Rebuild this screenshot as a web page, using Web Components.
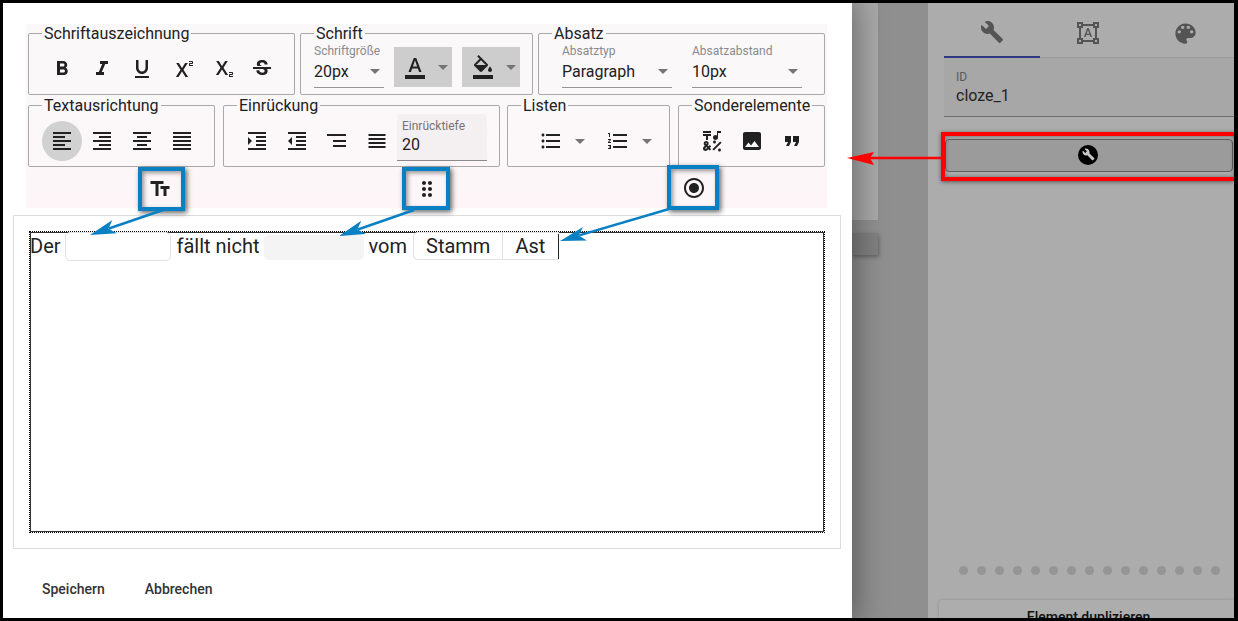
<!DOCTYPE html>
<html lang="de">
<head>
<meta charset="utf-8">
<title>Cloze</title>
<style>
  html, body { margin: 0; background: #000; }
  body { font-family: Roboto, "Liberation Sans", sans-serif; color: #212121; }
</style>
</head>
<body>

<x-frame>
  <x-dialog slot="dialog">
    <x-toolbar>
      <x-row>
        <x-group legend="Schriftauszeichnung" w="267" pad="13" dy="1">
          <x-btn icon="bold"></x-btn><x-btn icon="italic"></x-btn><x-btn icon="underline"></x-btn>
          <x-btn icon="sup"></x-btn><x-btn icon="sub"></x-btn><x-btn icon="strike"></x-btn>
        </x-group>
        <x-group legend="Schrift" w="233" pad="13" dy="-3">
          <x-select label="Schriftgröße" value="20px" w="70"></x-select>
          <x-color icon="colortext" style="margin-left:10px"></x-color>
          <x-color icon="colorfill" style="margin-left:10px"></x-color>
        </x-group>
        <x-group legend="Absatz" w="287" pad="23" dy="-3">
          <x-select label="Absatztyp" value="Paragraph" w="110"></x-select>
          <x-select label="Absatzabstand" value="10px" w="110" style="margin-left:20px"></x-select>
        </x-group>
      </x-row>
      <x-row>
        <x-group legend="Textausrichtung" w="187" pad="13" dy="1">
          <x-btn icon="alignleft" active></x-btn><x-btn icon="alignright"></x-btn>
          <x-btn icon="aligncenter"></x-btn><x-btn icon="alignjustify"></x-btn>
        </x-group>
        <x-group legend="Einrückung" w="277" pad="13" dy="1" style="margin-right:-1px">
          <x-btn icon="indent"></x-btn><x-btn icon="outdent"></x-btn>
          <x-btn icon="threelines"></x-btn><x-btn icon="fourlines"></x-btn>
          <x-numfield label="Einrücktiefe" value="20"></x-numfield>
        </x-group>
        <x-group legend="Listen" w="163" pad="23" dy="1">
          <x-btn icon="bullets"></x-btn><x-caret></x-caret>
          <x-btn icon="numbers" style="margin-left:8px"></x-btn><x-caret></x-caret>
        </x-group>
        <x-group legend="Sonderelemente" w="147" pad="13" dy="1">
          <x-btn icon="symbols"></x-btn><x-btn icon="image"></x-btn><x-btn icon="quote"></x-btn>
        </x-group>
      </x-row>
    </x-toolbar>

    <x-editor>
      Der
      <x-blank style="width:106px;margin-left:4px;margin-right:6px"></x-blank>
      fällt nicht
      <x-blank filled style="width:100px;margin-left:4px;margin-right:5px"></x-blank>
      vom
      <x-toggle style="margin-left:6px"><span>Stamm</span><span>Ast</span></x-toggle>
    </x-editor>

    <x-actions>
      <x-text-btn>Speichern</x-text-btn>
      <x-text-btn>Abbrechen</x-text-btn>
    </x-actions>
  </x-dialog>

  <x-behind slot="behind"></x-behind>

  <x-sidepanel slot="side">
    <x-tabs></x-tabs>
    <x-idfield label="ID" value="cloze_1"></x-idfield>
    <x-wide-btn></x-wide-btn>
    <x-dots count="15"></x-dots>
    <x-card>Element duplizieren</x-card>
  </x-sidepanel>

  <x-annotations slot="overlay"></x-annotations>
</x-frame>

<script>
  // material icon paths, 24x24
  const ICONS = {
    bold: 'M15.6 10.79c.97-.67 1.65-1.77 1.65-2.79 0-2.26-1.75-4-4-4H7v14h7.04c2.09 0 3.71-1.7 3.71-3.79 0-1.52-.86-2.82-2.15-3.42zM10 6.5h3c.83 0 1.5.67 1.5 1.5s-.67 1.5-1.5 1.5h-3v-3zm3.5 9H10v-3h3.5c.83 0 1.5.67 1.5 1.5s-.67 1.5-1.5 1.5z',
    italic: 'M10 4v3h2.21l-3.42 8H6v3h8v-3h-2.21l3.42-8H18V4z',
    underline: 'M12 17c3.31 0 6-2.69 6-6V3h-2.5v8c0 1.93-1.57 3.5-3.5 3.5S8.5 12.93 8.5 11V3H6v8c0 3.31 2.69 6 6 6zm-7 2v2h14v-2H5z',
    sup: 'M22 7h-2v1h3v1h-4V7c0-.55.45-1 1-1h2V5h-3V4h3c.55 0 1 .45 1 1v1c0 .55-.45 1-1 1zM5.88 20h2.66l3.4-5.42h.12l3.4 5.42h2.66l-4.65-7.27L17.81 6h-2.68l-3.07 4.99h-.12L8.85 6H6.19l4.32 6.73L5.88 20z',
    sub: 'M22 18h-2v1h3v1h-4v-2c0-.55.45-1 1-1h2v-1h-3v-1h3c.55 0 1 .45 1 1v1c0 .55-.45 1-1 1zM5.88 18h2.66l3.4-5.42h.12l3.4 5.42h2.66l-4.65-7.27L17.81 4h-2.68l-3.07 4.99h-.12L8.85 4H6.19l4.32 6.73L5.88 18z',
    strike: 'M7.24 8.75c-.26-.48-.39-1.03-.39-1.67 0-.61.13-1.16.4-1.67.26-.5.63-.93 1.11-1.29.48-.35 1.05-.63 1.7-.83.66-.19 1.39-.29 2.18-.29.81 0 1.54.11 2.21.34.66.22 1.23.54 1.69.94.47.4.83.88 1.08 1.43.25.55.38 1.15.38 1.81h-3.01c0-.31-.05-.59-.15-.85-.09-.27-.24-.49-.44-.68-.2-.19-.45-.33-.75-.44-.3-.1-.66-.16-1.06-.16-.39 0-.74.04-1.03.13-.29.09-.53.21-.72.36-.19.16-.34.34-.44.55-.1.21-.15.43-.15.66 0 .48.25.88.74 1.21.38.25.77.48 1.41.7H7.39c-.05-.08-.11-.17-.15-.25zM21 12v-2H3v2h9.62c.18.07.4.14.55.2.37.17.66.34.87.51.21.17.35.36.43.57.07.2.11.43.11.69 0 .23-.05.45-.14.66-.09.2-.23.38-.42.53-.19.15-.42.26-.71.35-.29.08-.63.13-1.01.13-.43 0-.83-.04-1.18-.13s-.66-.23-.91-.42c-.25-.19-.45-.44-.59-.75-.14-.31-.25-.76-.25-1.21H6.4c0 .55.08 1.13.24 1.58.16.45.37.85.65 1.21.28.35.6.66.98.92.37.26.78.48 1.22.65.44.17.9.3 1.38.39.48.08.96.13 1.44.13.8 0 1.53-.09 2.18-.28s1.21-.45 1.67-.79c.46-.34.82-.77 1.07-1.27s.38-1.07.38-1.71c0-.6-.1-1.14-.31-1.61-.05-.11-.11-.23-.17-.33H21z',
    alignleft: 'M15 15H3v2h12v-2zm0-8H3v2h12V7zM3 13h18v-2H3v2zm0 8h18v-2H3v2zM3 3v2h18V3H3z',
    alignright: 'M3 21h18v-2H3v2zm6-4h12v-2H9v2zm-6-4h18v-2H3v2zm6-4h12V7H9v2zM3 3v2h18V3H3z',
    aligncenter: 'M7 15v2h10v-2H7zm-4 6h18v-2H3v2zm0-8h18v-2H3v2zm4-6v2h10V7H7zM3 3v2h18V3H3z',
    alignjustify: 'M3 21h18v-2H3v2zm0-4h18v-2H3v2zm0-4h18v-2H3v2zm0-4h18V7H3v2zm0-6v2h18V3H3z',
    indent: 'M3 21h18v-2H3v2zM3 8v8l4-4-4-4zm8 9h10v-2H11v2zM3 3v2h18V3H3zm8 6h10V7H11v2zm0 4h10v-2H11v2z',
    outdent: 'M11 17h10v-2H11v2zm-8-5l4 4V8l-4 4zm0 9h18v-2H3v2zM3 3v2h18V3H3zm8 6h10V7H11v2zm0 4h10v-2H11v2z',
    threelines: 'M2 5h19v2H2zM8 11h13v2H8zM8 16h13v2H8z',
    fourlines: 'M3.5 5h17v2h-17zM3.5 9h17v2h-17zM3.5 13h17v2h-17zM3.5 17h17v2h-17z',
    bullets: 'M4 10.5c-.83 0-1.5.67-1.5 1.5s.67 1.5 1.5 1.5 1.5-.67 1.5-1.5-.67-1.5-1.5-1.5zm0-6c-.83 0-1.5.67-1.5 1.5S3.17 7.5 4 7.5 5.5 6.83 5.5 6 4.83 4.5 4 4.5zm0 12c-.83 0-1.5.68-1.5 1.5s.68 1.5 1.5 1.5 1.5-.68 1.5-1.5-.67-1.5-1.5-1.5zM7 19h14v-2H7v2zm0-6h14v-2H7v2zm0-8v2h14V5H7z',
    numbers: 'M2 17h2v.5H3v1h1v.5H2v1h3v-4H2v1zm1-9h1V4H2v1h1v3zm-1 3h1.8L2 13.1v.9h3v-1H3.2L5 10.9V10H2v1zm5-6v2h14V5H7zm0 14h14v-2H7v2zm0-6h14v-2H7v2z',
    image: 'M21 19V5c0-1.1-.9-2-2-2H5c-1.1 0-2 .9-2 2v14c0 1.1.9 2 2 2h14c1.1 0 2-.9 2-2zM8.5 13.5l2.5 3.01L14.5 12l4.5 6H5l3.5-4.5z',
    quote: 'M6 17h3l2-4V7H5v6h3zm8 0h3l2-4V7h-6v6h3z',
    symbols: 'M3 2h8v2H3zM6 11h2V7h3V5H3v2h3zM12.4 20.18l7.78-7.78 1.42 1.42-7.78 7.78zM14.5 14.5c.83 0 1.5-.67 1.5-1.5s-.67-1.5-1.5-1.5S13 12.17 13 13s.67 1.5 1.5 1.5zM19.5 19.5c-.83 0-1.5.67-1.5 1.5s.67 1.5 1.5 1.5S21 21.83 21 21s-.67-1.5-1.5-1.5zM15.5 11c1.38 0 2.5-1.12 2.5-2.5V4h3V2h-4v4.51c-.42-.32-.93-.51-1.5-.51C14.12 6 13 7.12 13 8.5S14.12 11 15.5 11zM9.74 15.96l-1.41 1.41-.71-.71.35-.35c.98-.98.98-2.56 0-3.54-.49-.49-1.13-.73-1.77-.73s-1.28.24-1.77.73c-.98.98-.98 2.56 0 3.54l.35.35-1.06 1.06c-.98.98-.98 2.56 0 3.54.49.49 1.13.74 1.78.74s1.28-.24 1.77-.73l1.06-1.06 1.41 1.41 1.41-1.41-1.41-1.41 1.41-1.41zM5.85 14c.2-.2.54-.2.74 0s.2.54 0 .74l-.35.35-.35-.35c-.24-.2-.24-.54-.04-.74zm.35 5.86c-.2.2-.54.2-.74 0-.2-.2-.2-.54 0-.74l1.06-1.06.71.71z',
    colortext: 'M2 20h20v4H2v-4zm3.49-3h2.42l1.27-3.58h5.65L16.09 17h2.42L13.25 3h-2.5L5.49 17zm4.42-5.61 2.03-5.79h.12l2.03 5.79H9.91z',
    colorfill: 'M16.56 8.94 7.62 0 6.21 1.41l2.38 2.38-5.15 5.15c-.59.59-.59 1.54 0 2.12l5.5 5.5c.29.29.68.44 1.06.44s.77-.15 1.06-.44l5.5-5.5c.59-.58.59-1.53 0-2.12zM5.21 10 10 5.21 14.79 10H5.21zM19 11.5s-2 2.17-2 3.5c0 1.1.9 2 2 2s2-.9 2-2c0-1.33-2-3.5-2-3.5zM2 20h20v4H2v-4z',
    wrench: 'M22.7 19l-9.1-9.1c.9-2.3.4-5-1.5-6.9-2-2-5-2.4-7.4-1.3L9 6 6 9 1.6 4.7C.4 7.1.9 10.1 2.9 12.1c1.9 1.9 4.6 2.4 6.9 1.5l9.1 9.1c.4.4 1 .4 1.4 0l2.3-2.3c.5-.4.5-1.1.1-1.4z',
    shapes: 'M23 7V1h-6v2H7V1H1v6h2v10H1v6h6v-2h10v2h6v-6h-2V7h2zM3 3h2v2H3V3zm2 18H3v-2h2v2zm12-2H7v-2H5V7h2V5h10v2h2v10h-2v2zm4 2h-2v-2h2v2zM19 5V3h2v2h-2zm-5.27 9h-3.49l-.73 2H7.89l3.4-9h1.4l3.41 9h-1.63l-.74-2zm-3.04-1.26h2.61L12 8.91l-1.31 3.83z',
    palette: 'M12 3c-4.97 0-9 4.03-9 9s4.03 9 9 9c.83 0 1.5-.67 1.5-1.5 0-.39-.15-.74-.39-1.01-.24-.27-.38-.62-.38-.99 0-.83.67-1.5 1.5-1.5H16c2.76 0 5-2.24 5-5 0-4.42-4.03-8-9-8zm-5.5 9c-.83 0-1.5-.67-1.5-1.5S5.67 9 6.5 9 8 9.67 8 10.5 7.33 12 6.5 12zm3-4C8.67 8 8 7.33 8 6.5S8.67 5 9.5 5s1.5.67 1.5 1.5S10.33 8 9.5 8zm5 0c-.83 0-1.5-.67-1.5-1.5S13.67 5 14.5 5s1.5.67 1.5 1.5S15.33 8 14.5 8zm3 4c-.83 0-1.5-.67-1.5-1.5S16.67 9 17.5 9s1.5.67 1.5 1.5-.67 1.5-1.5 1.5z',
    textfields: 'M2.5 4v3h5v12h3V7h5V4h-13zm19 5h-9v3h3v7h3v-7h3V9z',
    drag: 'M11 18c0 1.1-.9 2-2 2s-2-.9-2-2 .9-2 2-2 2 .9 2 2zm-2-8c-1.1 0-2 .9-2 2s.9 2 2 2 2-.9 2-2-.9-2-2-2zm0-6c-1.1 0-2 .9-2 2s.9 2 2 2 2-.9 2-2-.9-2-2-2zm6 4c1.1 0 2-.9 2-2s-.9-2-2-2-2 .9-2 2 .9 2 2 2zm0 2c-1.1 0-2 .9-2 2s.9 2 2 2 2-.9 2-2-.9-2-2-2zm0 6c-1.1 0-2 .9-2 2s.9 2 2 2 2-.9 2-2-.9-2-2-2z',
    radio: 'M12 7c-2.76 0-5 2.24-5 5s2.24 5 5 5 5-2.24 5-5-2.24-5-5-5zm0-5C6.48 2 2 6.48 2 12s4.48 10 10 10 10-4.48 10-10S17.52 2 12 2zm0 18c-4.42 0-8-3.58-8-8s3.58-8 8-8 8 3.58 8 8-3.58 8-8 8z'
  };

  const svg = (name, size = 24, color = 'currentColor') =>
    `<svg width="${size}" height="${size}" viewBox="0 0 24 24" fill="${color}" fill-rule="evenodd" style="display:block"><path d="${ICONS[name]}"/></svg>`;

  // small helper, every element is just shadow + style + markup
  class Base extends HTMLElement {
    connectedCallback() {
      if (this.shadowRoot) return;
      this.attachShadow({ mode: 'open' });
      this.shadowRoot.innerHTML = this.render();
    }
    attr(name, fallback = '') {
      return this.getAttribute(name) ?? fallback;
    }
  }

  class XFrame extends Base {
    render() {
      return `<style>
        :host { display: flex; box-sizing: border-box; width: 1238px; height: 621px; position: relative;
                border: solid #000; border-width: 3px 4px 3px 3px; overflow: hidden; background: #acacac; }
      </style>
      <slot name="dialog"></slot><slot name="behind"></slot><slot name="side"></slot><slot name="overlay"></slot>`;
    }
  }

  class XDialog extends Base {
    render() {
      return `<style>
        :host { display: block; flex: none; width: 849px; height: 615px; background: #fff; position: relative; z-index: 1;
                box-shadow: 0 0 28px 4px rgba(0,0,0,.38); box-sizing: border-box; padding-top: 21px; }
      </style><slot></slot>`;
    }
  }

  class XToolbar extends Base {
    render() {
      return `<style>
        :host { display: flex; flex-direction: column; gap: 0; box-sizing: border-box; width: 801px; height: 184px; margin-left: 23px;
                padding-left: 2px; background: linear-gradient(180deg, #fbf8fa 0%, #fbf8fa 45%, #fdf5f8 100%); }
      </style><slot></slot>`;
    }
  }

  class XRow extends Base {
    render() {
      return `<style>:host { display: flex; gap: 5px; margin-top: -1px; }
        :host(:nth-child(2)) { gap: 8px; margin-top: 0; }</style><slot></slot>`;
    }
  }

  class XGroup extends Base {
    render() {
      return `<style>
        :host { display: block; flex: none; width: ${this.attr('w')}px; }
        fieldset { display: flex; align-items: center; box-sizing: border-box; height: 72px; margin: 0; min-width: 0;
                   border: 1px solid #a9a9a9; border-radius: 2px; padding: 0; }
        legend { margin-left: 13px; padding: 2px 2px 0; font-size: 16px; line-height: 18px; color: #212121; white-space: nowrap; }
        .in { display: flex; align-items: center; margin-top: ${this.attr('dy', 0)}px; padding-left: ${this.attr('pad', 13)}px; }
      </style>
      <fieldset><legend>${this.attr('legend')}</legend><div class="in"><slot></slot></div></fieldset>`;
    }
  }

  class XBtn extends Base {
    render() {
      const on = this.hasAttribute('active');
      return `<style>
        :host { display: flex; flex: none; width: 40px; height: 40px; align-items: center; justify-content: center;
                border-radius: 50%; color: #212121; background: ${on ? '#d1d1d1' : 'transparent'}; }
      </style>${svg(this.attr('icon'))}`;
    }
  }

  class XCaret extends Base {
    render() {
      return `<style>
        :host { display: block; flex: none; width: 0; height: 0; border: solid transparent; border-width: 5px 5px 0;
                border-top-color: #757575; margin-left: 4px; margin-right: 5px; }
      </style>`;
    }
  }

  class XSelect extends Base {
    render() {
      return `<style>
        :host { display: block; flex: none; width: ${this.attr('w')}px; height: 40px; box-sizing: border-box; position: relative;
                border-bottom: 1px solid #949494; margin-top: 2px; }
        label { display: block; font-size: 12px; line-height: 13px; color: #8a8a8a; margin-top: -3px; white-space: nowrap; }
        .v { font-size: 16px; line-height: 19px; color: #212121; margin-top: 4px; white-space: nowrap; }
        .c { position: absolute; right: 4px; top: 21px; width: 0; height: 0; border: solid transparent;
             border-width: 5px 5px 0; border-top-color: #757575; }
      </style>
      <label>${this.attr('label')}</label><div class="v">${this.attr('value')}</div><div class="c"></div>`;
    }
  }

  class XColor extends Base {
    render() {
      return `<style>
        :host { display: flex; flex: none; width: 58px; height: 40px; align-items: center; align-self: flex-start; background: #cdcdcd; color: #212121; margin-top: 1px; }
        svg { margin-left: 9px; }
        .c { width: 0; height: 0; border: solid transparent; border-width: 5px 5px 0; border-top-color: #757575; margin-left: 11px; }
      </style>${svg(this.attr('icon'))}<div class="c"></div>`;
    }
  }

  class XNumfield extends Base {
    render() {
      return `<style>
        :host { display: block; flex: none; width: 90px; height: 47px; box-sizing: border-box; margin-top: -7px;
                background: #f4eff1; border-bottom: 1px solid #8a8a8a; border-radius: 4px 4px 0 0; padding: 6px 5px 0; }
        label { display: block; font-size: 12px; line-height: 13px; color: #757575; white-space: nowrap; }
        .v { font-size: 16px; line-height: 19px; margin-top: 2px; color: #212121; }
      </style><label>${this.attr('label')}</label><div class="v">${this.attr('value')}</div>`;
    }
  }

  class XEditor extends Base {
    render() {
      return `<style>
        :host { display: block; box-sizing: border-box; width: 828px; height: 334px; margin: 7px 0 0 10px; border: 1px solid #dcdcdc; padding: 15px; }
        .box { box-sizing: border-box; height: 302px; border: 1px dotted #000; box-shadow: inset 0 0 0 1px #333;
               font-size: 20px; line-height: 29px; color: #222; }
        .line { display: flex; align-items: flex-start; white-space: nowrap; }
      </style><div class="box"><div class="line"><slot></slot></div></div>`;
    }
  }

  class XBlank extends Base {
    render() {
      const filled = this.hasAttribute('filled');
      return `<style>
        :host { display: block; flex: none; box-sizing: border-box; border-radius: 5px;
                height: ${filled ? 25 : 29}px; margin-top: ${filled ? 3 : 0}px;
                ${filled ? 'background: #f4f4f4;' : 'border: 1px solid #e2e2e2;'} }
      </style>`;
    }
  }

  class XToggle extends Base {
    render() {
      return `<style>
        :host { display: flex; flex: none; box-sizing: border-box; height: 28px; border: 1px solid #e2e2e2; border-right: 0; border-radius: 5px 0 0 5px;
                position: relative; line-height: 27px; }
        ::slotted(span) { display: block; padding: 0 12px; }
        ::slotted(span:first-child) { border-right: 1px solid #e2e2e2; }
        ::slotted(span:last-child) { padding-right: 13px; }
        :host::after { content: ""; width: 1px; height: 25px; background: #222; align-self: flex-end; }
      </style><slot></slot>`;
    }
  }

  class XActions extends Base {
    render() {
      return `<style>:host { display: flex; margin: 27px 0 0 23px; }</style><slot></slot>`;
    }
  }

  class XTextBtn extends Base {
    render() {
      return `<style>
        :host { display: block; padding: 0 16px; margin-right: 8px; font-size: 14px; font-weight: 500; line-height: 26px; color: #333; }
      </style><slot></slot>`;
    }
  }

  class XBehind extends Base {
    render() {
      return `<style>
        :host { display: block; flex: none; width: 76px; height: 615px; background: #8f8f8f; position: relative; }
        .page { width: 26px; height: 217px; background: #a8a8a8; }
        .chip { margin-top: 13px; width: 26px; height: 22px; background: #808080; box-shadow: 1px 2px 4px rgba(0,0,0,.3); }
      </style><div class="page"></div><div class="chip"></div>`;
    }
  }

  class XSidepanel extends Base {
    render() {
      return `<style>
        :host { display: block; flex: 1; min-width: 0; height: 615px; background: #acacac; padding-left: 16px; box-sizing: border-box; }
      </style><slot></slot>`;
    }
  }

  class XTabs extends Base {
    render() {
      return `<style>
        :host { display: flex; height: 54px; border-bottom: 1px solid #9a9a9a; color: #545454; }
        div { flex: none; width: 96px; display: flex; align-items: center; justify-content: center; box-sizing: border-box; padding-top: 5px; height: 55px; }
        .on { border-bottom: 2px solid #2e3a80; }
        div:last-child { padding-left: 2px; }
      </style>
      <div class="on">${svg('wrench', 24)}</div><div>${svg('shapes', 24)}</div><div>${svg('palette', 27)}</div>`;
    }
  }

  class XIdfield extends Base {
    render() {
      return `<style>
        :host { display: block; box-sizing: border-box; height: 59px; background: #a7a7a7; border-bottom: 1px solid #6c6c6c; padding: 13px 12px 0; }
        label { display: block; font-size: 12px; line-height: 13px; color: #5a5a5a; }
        .v { font-size: 16px; line-height: 19px; margin-top: 2px; color: #222; }
      </style><label>${this.attr('label')}</label><div class="v">${this.attr('value')}</div>`;
    }
  }

  class XWideBtn extends Base {
    render() {
      return `<style>
        :host { display: flex; align-items: center; justify-content: center; box-sizing: border-box; height: 33px; margin: 22px 1px 0 1px;
                padding: 0 2px 2px 0; background: #9b9b9b; border: 1px solid #5e5e5e; border-radius: 4px; }
        .ic { width: 20px; height: 20px; border-radius: 50%; background: #000; display: flex; align-items: center; justify-content: center; color: #c8c8c8; }
      </style><div class="ic">${svg('wrench', 13)}</div>`;
    }
  }

  class XDots extends Base {
    render() {
      return `<style>
        :host { display: flex; gap: 9px; margin: 394px 0 0 15px; }
        i { width: 9px; height: 9px; border-radius: 50%; background: #959595; }
      </style>` + '<i></i>'.repeat(+this.attr('count'));
    }
  }

  class XCard extends Base {
    render() {
      return `<style>
        :host { display: block; margin: 25px 0 0 -5px; height: 60px; background: #adadad; border-radius: 3px 0 0 0; padding-left: 4px;
                box-shadow: 0 0 3px rgba(0,0,0,.2); text-align: center; font-size: 14px; font-weight: 500; line-height: 20px; padding-top: 7px; color: #111; }
      </style><slot></slot>`;
    }
  }

  // the tutorial marks on top of the screenshot, free canvas
  class XAnnotations extends Base {
    render() {
      const box = (x, y, w, h, icon, shift) => `<div class="box" style="left:${x}px;top:${y}px;width:${w}px;height:${h}px"><div style="transform:translateX(${shift}px)">${svg(icon, 24, '#212121')}</div></div>`;
      const arrow = (x1, y1, x2, y2) => {
        const a = Math.atan2(y2 - y1, x2 - x1), L = 26;
        const p = (d, s) => `${x2 - L * Math.cos(a) * d - s * Math.sin(a)},${y2 - L * Math.sin(a) * d + s * Math.cos(a)}`;
        return `<line x1="${x1}" y1="${y1}" x2="${x2 - 20 * Math.cos(a)}" y2="${y2 - 20 * Math.sin(a)}" stroke="#0a80c4" stroke-width="2.5"/>
                <polygon points="${x2},${y2} ${p(1, 7)} ${p(.75, 0)} ${p(1, -7)}" fill="#0a80c4"/>`;
      };
      return `<style>
        :host { position: absolute; left: -3px; top: -3px; width: 1238px; height: 621px; z-index: 5; pointer-events: none; }
        .box { position: absolute; box-sizing: border-box; border: 4px solid #0a80c4; display: flex; align-items: center; justify-content: center;
               box-shadow: 2px 2px 5px rgba(0,0,0,.6), inset 2px 2px 4px rgba(0,0,0,.4); background: #fdf6f9; }
        .red { position: absolute; left: 941px; top: 132px; width: 293px; height: 49px; box-sizing: border-box; border: 4px solid #f00; border-right: 0;
               box-shadow: 0 1px 4px rgba(0,0,0,.5), inset 0 0 4px rgba(0,0,0,.4); }
        svg.lines { position: absolute; left: 0; top: 0; }
      </style>
      ${box(138, 167, 47, 44, 'textfields', -2)}
      ${box(402, 167, 48, 43, 'drag', 1)}
      ${box(667, 165, 52, 45, 'radio', 1)}
      <div class="red"></div>
      <svg class="lines" width="1238" height="621">
        ${arrow(163, 210, 90, 235)}
        ${arrow(414, 210, 339, 236)}
        ${arrow(669, 209, 560, 241)}
        <line x1="941" y1="158" x2="870" y2="158" stroke="#f00" stroke-width="2.5"/>
        <polygon points="847,158 874,152 870,158 874,165" fill="#f00"/>
      </svg>`;
    }
  }

  const defs = {
    'x-frame': XFrame, 'x-dialog': XDialog, 'x-toolbar': XToolbar, 'x-row': XRow, 'x-group': XGroup,
    'x-btn': XBtn, 'x-caret': XCaret, 'x-select': XSelect, 'x-color': XColor, 'x-numfield': XNumfield,
    'x-editor': XEditor, 'x-blank': XBlank, 'x-toggle': XToggle, 'x-actions': XActions, 'x-text-btn': XTextBtn,
    'x-behind': XBehind, 'x-sidepanel': XSidepanel, 'x-tabs': XTabs, 'x-idfield': XIdfield, 'x-wide-btn': XWideBtn,
    'x-dots': XDots, 'x-card': XCard, 'x-annotations': XAnnotations
  };
  for (const name in defs) customElements.define(name, defs[name]);
</script>
</body>
</html>
